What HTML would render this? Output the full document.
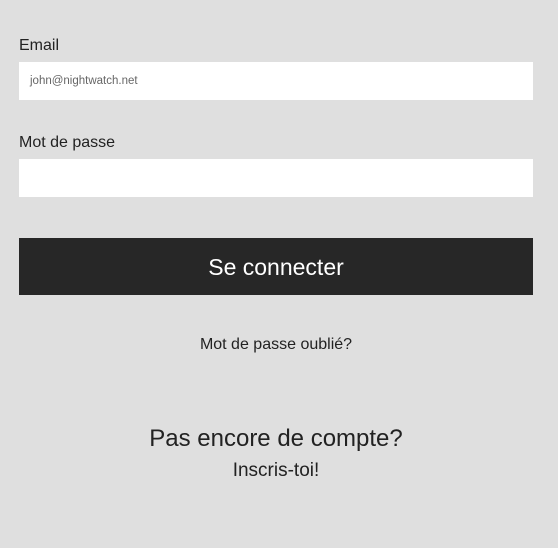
<!DOCTYPE html>
<html><head><style>
body{margin:0;width:558px;height:548px;background:#dfdfdf;font-family:"Liberation Sans",sans-serif;color:#222;position:relative;overflow:hidden}
.a{position:absolute}
.lbl{left:19px;font-size:16px}
.in{left:19px;width:514px;height:38px;background:#fff}
</style></head><body>
<div class="a lbl" style="top:37px">Email</div>
<div class="a in" style="top:62px"><span style="position:absolute;left:11px;top:13px;font-size:11.5px;color:#666">john@nightwatch.net</span></div>
<div class="a lbl" style="top:134px">Mot de passe</div>
<div class="a in" style="top:159px"></div>
<div class="a" style="left:19px;top:238px;width:514px;height:57px;background:#272727;color:#fff;font-size:23px;text-align:center;line-height:59px">Se connecter</div>
<div class="a" style="left:0;width:552px;top:336px;text-align:center;font-size:16px">Mot de passe oublié?</div>
<div class="a" style="left:0;width:552px;top:425px;text-align:center;font-size:24px">Pas encore de compte?</div>
<div class="a" style="left:0;width:552px;top:460px;text-align:center;font-size:19px">Inscris-toi!</div>
</body></html>
